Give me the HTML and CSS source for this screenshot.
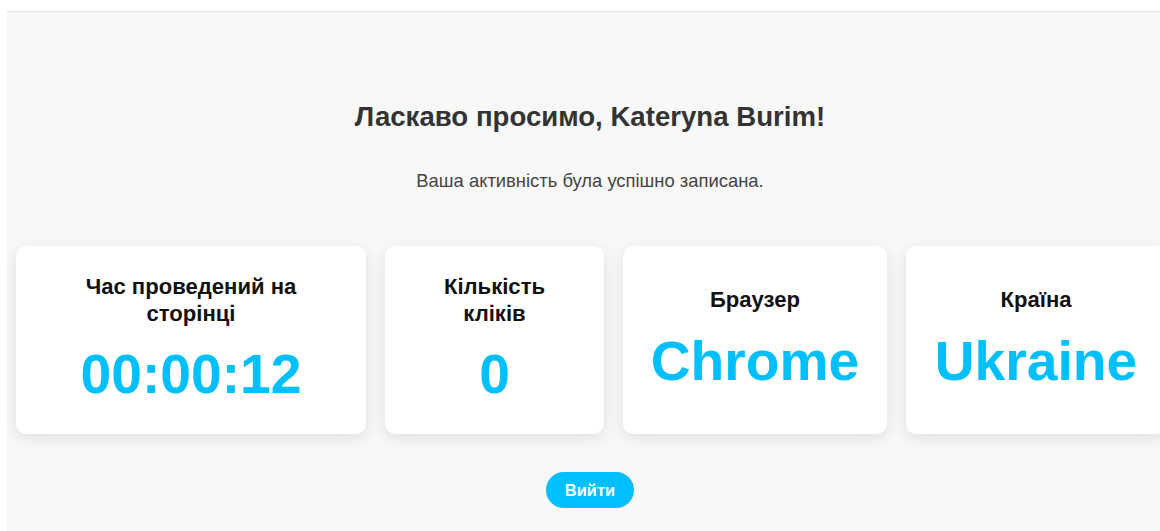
FILE: index.html
```html
<!DOCTYPE html>
<html lang="uk">
<head>
<meta charset="utf-8">
<title>Ласкаво просимо</title>
<link rel="stylesheet" href="styles.css">
</head>
<body>
<main class="page">
  <h1 class="welcome">Ласкаво просимо, Kateryna Burim!</h1>
  <p class="status">Ваша активність була успішно записана.</p>
  <section class="stats">
    <div class="card card--time">
      <h2 class="card__label">Час проведений на сторінці</h2>
      <div class="card__value">00:00:12</div>
    </div>
    <div class="card card--clicks">
      <h2 class="card__label">Кількість кліків</h2>
      <div class="card__value">0</div>
    </div>
    <div class="card card--browser">
      <h2 class="card__label">Браузер</h2>
      <div class="card__value">Chrome</div>
    </div>
    <div class="card card--country">
      <h2 class="card__label">Країна</h2>
      <div class="card__value">Ukraine</div>
    </div>
  </section>
  <button class="logout" type="button">Вийти</button>
</main>
</body>
</html>
```

FILE: styles.css
```css
html, body {
  margin: 0;
  padding: 0;
  overflow: hidden;
  background: #ffffff;
}

body {
  font-family: "Liberation Sans", Arial, sans-serif;
  width: 1160px;
  height: 531px;
}

.page {
  box-sizing: border-box;
  margin: 11px 0 0 7px;
  width: 1166px;
  min-height: 520px;
  padding: 89px 9px 0;
  background: #f8f8f8;
  border-top: 1px solid #e2e2e2;
  box-shadow: inset 0 1px 1px rgba(0, 0, 0, 0.03);
  display: flex;
  flex-direction: column;
  align-items: center;
  text-align: center;
}

.welcome {
  margin: 0;
  font-size: 27.6px;
  line-height: 32px;
  font-weight: bold;
  color: #333333;
}

.status {
  margin: 37px 0 0;
  font-size: 18.4px;
  line-height: 22px;
  color: #444444;
}

.stats {
  margin-top: 54px;
  display: grid;
  grid-template-columns: 350px 219px 264px 260px;
  gap: 19px;
  align-self: stretch;
}

.card {
  box-sizing: border-box;
  height: 188px;
  padding: 27px 28px;
  background: #ffffff;
  border-radius: 10px;
  box-shadow: 0 4px 15px rgba(0, 0, 0, 0.1);
  display: flex;
  flex-direction: column;
  justify-content: center;
  align-items: center;
}

.card__label {
  margin: 0 0 14.5px;
  font-size: 22.1px;
  line-height: 27px;
  font-weight: bold;
  color: #111111;
}

.card__value {
  font-size: 55.2px;
  line-height: 66px;
  font-weight: bold;
  color: #00bfff;
  white-space: nowrap;
}

.logout {
  margin-top: 38px;
  height: 36px;
  width: 88px;
  border: none;
  border-radius: 18px;
  background: #00bfff;
  color: #ffffff;
  font-family: "Liberation Sans", Arial, sans-serif;
  font-size: 16.5px;
  font-weight: bold;
  cursor: pointer;
}
```
